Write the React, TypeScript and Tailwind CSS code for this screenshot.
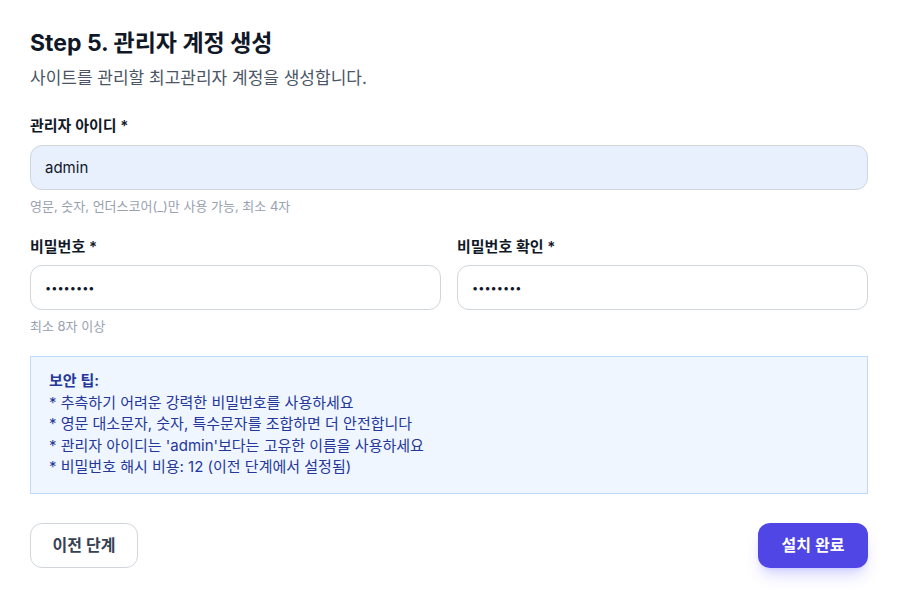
export default function App() {
  return (
    <div
      className="min-h-screen bg-white pl-[30px] pr-[35px] pt-[28px]"
      style={{ fontFamily: 'Inter, "Noto Sans CJK KR", sans-serif' }}
    >
      {/* Header */}
      <h2 className="text-[23px] font-bold leading-[30px] text-gray-900">Step 5. 관리자 계정 생성</h2>
      <p className="mt-[8px] text-[17px] leading-[24px] text-gray-600">사이트를 관리할 최고관리자 계정을 생성합니다.</p>

      {/* Admin id */}
      <div className="mt-[26px]">
        <label className="block text-[15px] font-semibold leading-[20px] text-gray-900">관리자 아이디 *</label>
        <input
          type="text"
          defaultValue="admin"
          className="mt-[9px] block h-[45px] w-full rounded-xl border border-gray-300 bg-[#e8f0fe] px-[14px] text-[15px] text-gray-900 outline-none"
        />
        <p className="mt-[7px] text-[13px] leading-[18px] text-gray-400">영문, 숫자, 언더스코어(_)만 사용 가능, 최소 4자</p>
      </div>

      {/* Passwords */}
      <div className="mt-[22px] grid grid-cols-2 gap-4">
        <div>
          <label className="block text-[15px] font-semibold leading-[20px] text-gray-900">비밀번호 *</label>
          <input
            type="password"
            defaultValue="password"
            className="mt-[8px] block h-[45px] w-full rounded-xl border border-gray-300 bg-white px-[14px] text-[11px] text-gray-900 outline-none"
          />
          <p className="mt-[7px] text-[13px] leading-[18px] text-gray-400">최소 8자 이상</p>
        </div>
        <div>
          <label className="block text-[15px] font-semibold leading-[20px] text-gray-900">비밀번호 확인 *</label>
          <input
            type="password"
            defaultValue="password"
            className="mt-[8px] block h-[45px] w-full rounded-xl border border-gray-300 bg-white px-[14px] text-[11px] text-gray-900 outline-none"
          />
        </div>
      </div>

      {/* Security tips */}
      <div className="mt-[21px] border border-blue-200 bg-blue-50 px-[18px] pt-[13px] pb-[15px] text-[15px] leading-[21.5px] text-[#25379a]">
        <p className="font-semibold">보안 팁:</p>
        <p>* 추측하기 어려운 강력한 비밀번호를 사용하세요</p>
        <p>* 영문 대소문자, 숫자, 특수문자를 조합하면 더 안전합니다</p>
        <p>* 관리자 아이디는 'admin'보다는 고유한 이름을 사용하세요</p>
        <p>* 비밀번호 해시 비용: 12 (이전 단계에서 설정됨)</p>
      </div>

      {/* Actions */}
      <div className="mt-[29px] flex items-center justify-between">
        <button className="h-[45px] w-[108px] rounded-xl border border-gray-300 bg-white text-[16px] font-semibold text-gray-700">
          이전 단계
        </button>
        <button className="h-[45px] w-[110px] rounded-xl bg-[#4f46e5] text-[16px] font-semibold text-white shadow-lg shadow-indigo-500/25">
          설치 완료
        </button>
      </div>
    </div>
  )
}
